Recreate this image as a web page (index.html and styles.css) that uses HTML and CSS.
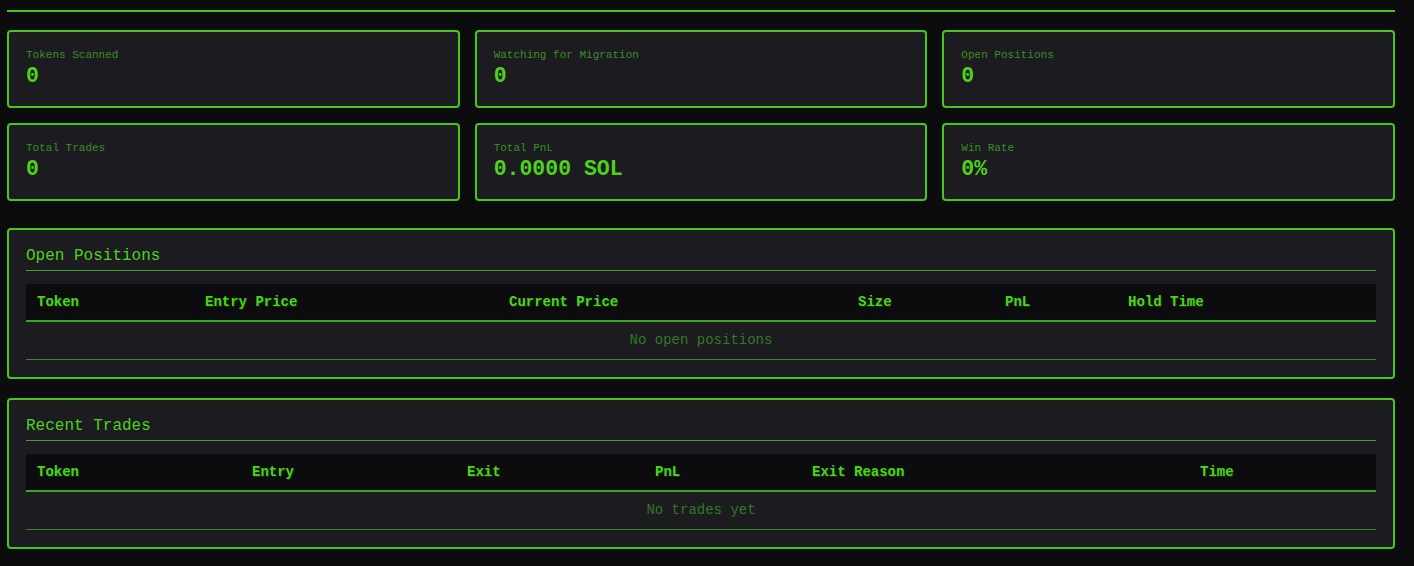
FILE: index.html
```html
<!DOCTYPE html>
<html lang="en">
<head>
<meta charset="utf-8">
<title>Sniper Dashboard</title>
<link rel="stylesheet" href="styles.css">
</head>
<body>
<div class="page">
  <div class="topbar"></div>

  <div class="stats">
    <div class="stat"><div class="stat-label">Tokens Scanned</div><div class="stat-value">0</div></div>
    <div class="stat"><div class="stat-label">Watching for Migration</div><div class="stat-value">0</div></div>
    <div class="stat"><div class="stat-label">Open Positions</div><div class="stat-value">0</div></div>
    <div class="stat"><div class="stat-label">Total Trades</div><div class="stat-value">0</div></div>
    <div class="stat"><div class="stat-label">Total PnL</div><div class="stat-value">0.0000 SOL</div></div>
    <div class="stat"><div class="stat-label">Win Rate</div><div class="stat-value">0%</div></div>
  </div>

  <section class="panel panel-first">
    <h2 class="panel-title">Open Positions</h2>
    <table class="grid">
      <colgroup>
        <col class="c168"><col class="c304"><col class="c349"><col class="c147"><col class="c123"><col>
      </colgroup>
      <thead>
        <tr><th>Token</th><th>Entry Price</th><th>Current Price</th><th>Size</th><th>PnL</th><th>Hold Time</th></tr>
      </thead>
      <tbody>
        <tr><td class="empty" colspan="6">No open positions</td></tr>
      </tbody>
    </table>
  </section>

  <section class="panel">
    <h2 class="panel-title">Recent Trades</h2>
    <table class="grid">
      <colgroup>
        <col class="c215"><col class="c215"><col class="c188"><col class="c157"><col class="c388"><col>
      </colgroup>
      <thead>
        <tr><th>Token</th><th>Entry</th><th>Exit</th><th>PnL</th><th>Exit Reason</th><th>Time</th></tr>
      </thead>
      <tbody>
        <tr><td class="empty" colspan="6">No trades yet</td></tr>
      </tbody>
    </table>
  </section>
</div>
</body>
</html>
```

FILE: styles.css
```css
html, body {
  margin: 0;
  padding: 0;
  background: #0c0b0e;
}

body {
  font-family: "Liberation Mono", "Courier New", monospace;
  color: #4cd41b;
}

.page {
  margin: 0 19px 0 7px;
}

.topbar {
  height: 10px;
  border-bottom: 2px solid #44c81b;
  margin-bottom: 18px;
}

.stats {
  display: grid;
  grid-template-columns: repeat(3, 1fr);
  gap: 15px 15px;
}

.stat {
  background: #1c1b1f;
  border: 2px solid #44c81b;
  border-radius: 4px;
  padding: 17px 17px;
  height: 40px;
}

.stat-label {
  font-size: 11px;
  line-height: 13px;
  color: #3a8f26;
  margin-bottom: 2px;
}

.stat-value {
  font-size: 21.5px;
  line-height: 24px;
  font-weight: bold;
  color: #4cd41b;
}

.panel {
  background: #1c1b1f;
  border: 2px solid #44c81b;
  border-radius: 4px;
  padding: 17px 17px;
  margin-top: 19px;
}

.panel-first {
  margin-top: 27px;
}

.panel-title {
  margin: 0 0 13px;
  font-size: 16px;
  line-height: 18px;
  font-weight: normal;
  color: #4cd41b;
  padding-bottom: 5px;
  border-bottom: 1px solid #3aa521;
}

.grid {
  width: 100%;
  border-collapse: collapse;
  table-layout: fixed;
}

.c168 { width: 168px; }
.c304 { width: 304px; }
.c349 { width: 349px; }
.c147 { width: 147px; }
.c123 { width: 123px; }
.c215 { width: 215px; }
.c188 { width: 188px; }
.c157 { width: 157px; }
.c388 { width: 388px; }

.grid th {
  background: #0c0b0e;
  text-align: left;
  font-size: 14px;
  line-height: 16px;
  font-weight: bold;
  color: #4cd41b;
  padding: 10px 11px;
  border-bottom: 2px solid #3aa521;
  text-shadow: 1px 1px 1px rgba(20, 70, 8, 0.8);
}

.grid td {
  font-size: 14px;
  line-height: 16px;
  padding: 10px 11px 11px;
  border-bottom: 1px solid #2f8a1f;
}

.grid td.empty {
  text-align: center;
  color: #2f7a25;
}
```
